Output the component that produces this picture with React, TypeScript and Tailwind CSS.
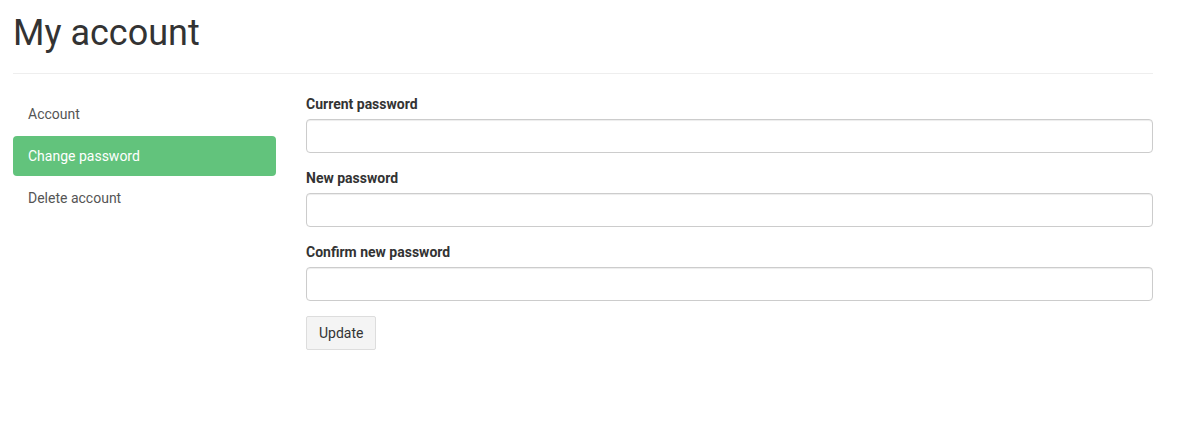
import React from 'react';

const items = ['Account', 'Change password', 'Delete account'];
const fields = ['Current password', 'New password', 'Confirm new password'];

export default function App() {
  return (
    <div className="min-h-screen bg-white text-[#333] font-['Roboto',sans-serif] text-[14px] leading-[20px]">
      <div className="ml-[13px] w-[1140px]">
        <div className="mb-[20px] border-b border-[#eee] pb-[9px]">
          <h1 className="mt-[14px] mb-[10px] text-[36px] leading-[1.1] font-normal text-[#333]">My account</h1>
        </div>

        <div className="flex gap-[30px]">
          {/* sidebar */}
          <ul className="flex w-[263px] flex-col gap-[2px]">
            {items.map(item => (
              <li key={item}>
                <a
                  href="#"
                  className={`block rounded-[4px] px-[15px] py-[10px] ${item === 'Change password' ? 'bg-[#62c37c] text-white' : 'text-[#555]'}`}
                >
                  {item}
                </a>
              </li>
            ))}
          </ul>

          {/* form */}
          <form className="flex-1">
            {fields.map(f => (
              <div key={f} className="mb-[15px]">
                <label className="mb-[5px] block font-bold text-[#333]">{f}</label>
                <input
                  type="password"
                  className="block h-[34px] w-full rounded-[4px] border border-[#ccc] bg-white px-3 shadow-[inset_0_1px_1px_rgba(0,0,0,0.075)]"
                />
              </div>
            ))}
            <button
              type="button"
              className="h-[34px] rounded-[2px] border border-[#ddd] bg-[#f4f4f4] px-[12px] text-[#333]"
            >
              Update
            </button>
          </form>
        </div>
      </div>
    </div>
  );
}
